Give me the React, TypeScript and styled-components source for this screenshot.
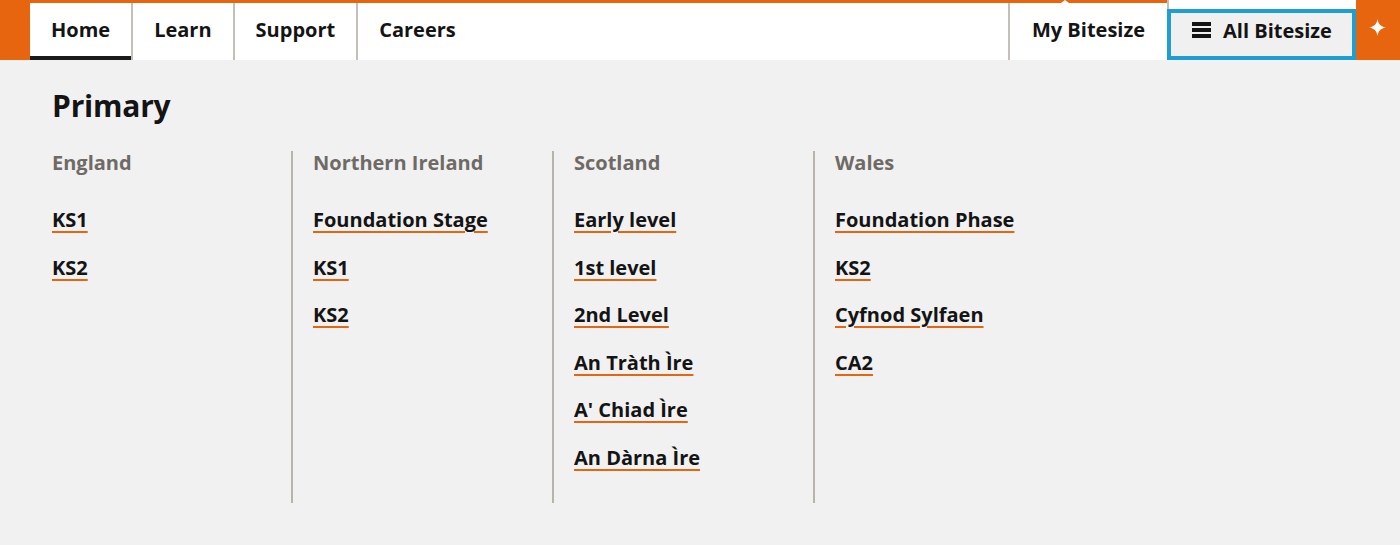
import React from 'react'
import styled, { createGlobalStyle } from 'styled-components'

const GlobalStyle = createGlobalStyle`
  body {
    margin: 0;
    background: #f1f1f1;
    font-family: 'Open Sans', 'Liberation Sans', sans-serif;
  }
`

interface Region {
  name: string,
  links: string[],
}

const regions: Region[] = [
  { name: 'England', links: ['KS1', 'KS2'] },
  { name: 'Northern Ireland', links: ['Foundation Stage', 'KS1', 'KS2'] },
  {
    name: 'Scotland',
    links: ['Early level', '1st level', '2nd Level', 'An Tràth Ìre', "A' Chiad Ìre", 'An Dàrna Ìre'],
  },
  { name: 'Wales', links: ['Foundation Phase', 'KS2', 'Cyfnod Sylfaen', 'CA2'] },
]

const tabs = ['Home', 'Learn', 'Support', 'Careers']

const MenuIcon = () => (
  <svg width="19" height="16" viewBox="0 0 19 16">
    <rect x="0" y="0" width="19" height="4" fill="#141414" />
    <rect x="0" y="6" width="19" height="4" fill="#141414" />
    <rect x="0" y="12" width="19" height="4" fill="#141414" />
  </svg>
)

const Sparkle = () => (
  <svg width="17" height="17" viewBox="0 0 14 14">
    <path d="M7 0 C7.6 4.2 9.8 6.4 14 7 C9.8 7.6 7.6 9.8 7 14 C6.4 9.8 4.2 7.6 0 7 C4.2 6.4 6.4 4.2 7 0Z" fill="#fff" />
  </svg>
)

const App: React.FC = () => {
  return (
    <>
      <GlobalStyle />
      <StyledHeader>
        <StyledNav>
          {tabs.map((tab, i) => (
            <StyledTab key={tab} active={i === 0} divided={i > 0}>{tab}</StyledTab>
          ))}
          <StyledSpacer />
          <StyledTab active={false} divided wide>My Bitesize</StyledTab>
        </StyledNav>
        <StyledAllWrap>
          <StyledAllButton>
            <MenuIcon />
            All Bitesize
          </StyledAllButton>
        </StyledAllWrap>
        <StyledStarCell>
          <Sparkle />
        </StyledStarCell>
        <StyledNotch />
      </StyledHeader>

      <StyledPanel>
        <StyledHeading>Primary</StyledHeading>
        <StyledColumns>
          {regions.map((region, i) => (
            <StyledColumn key={region.name} first={i === 0}>
              <StyledColumnTitle>{region.name}</StyledColumnTitle>
              <StyledLinkList>
                {region.links.map(link => (
                  <StyledLinkItem key={link}>
                    <StyledLink href="#">{link}</StyledLink>
                  </StyledLinkItem>
                ))}
              </StyledLinkList>
            </StyledColumn>
          ))}
        </StyledColumns>
      </StyledPanel>
    </>
  )
}

const StyledHeader = styled.header`
  position: relative;
  display: flex;
  height: 60px;
  background: #e8650f;
  padding-left: 30px;
`

const StyledNav = styled.nav`
  display: flex;
  flex: 1;
  margin-top: 3px;
  background: #fff;
`

const StyledTab = styled.a<{ active: boolean, divided: boolean, wide?: boolean }>`
  display: flex;
  align-items: center;
  padding: 0 ${p => (p.wide ? '22px' : '21px')} 4px;
  font-size: 20px;
  font-weight: 700;
  color: #141414;
  border-left: ${p => (p.divided ? '2px solid #c4c0b8' : 'none')};
  box-shadow: ${p => (p.active ? 'inset 0 -4px 0 #1a1a1a' : 'none')};
  cursor: pointer;
`

const StyledSpacer = styled.div`
  flex: 1;
`

const StyledAllWrap = styled.div`
  display: flex;
  background: #fff;
  border-left: 2px solid #c4c0b8;
  padding-top: 9px;
`

const StyledAllButton = styled.button`
  display: flex;
  align-items: center;
  gap: 12px;
  margin-left: -2px;
  width: 189px;
  padding: 0 0 9px 21px;
  background: #f0f0f0;
  border: 4px solid #1f9ed4;
  font-family: inherit;
  font-size: 20px;
  font-weight: 700;
  color: #141414;
  cursor: pointer;
`

const StyledStarCell = styled.div`
  box-sizing: border-box;
  display: flex;
  align-items: center;
  justify-content: center;
  width: 44px;
  padding: 0 2px 6px 0;
`

const StyledNotch = styled.span`
  position: absolute;
  top: 0;
  left: 1061px;
  width: 0;
  height: 0;
  border-left: 4px solid transparent;
  border-right: 4px solid transparent;
  border-bottom: 3px solid #fff;
`

const StyledPanel = styled.main`
  padding: 28px 0 0 52px;
  background: #f1f1f1;
`

const StyledHeading = styled.h1`
  margin: 0;
  font-size: 30px;
  line-height: 36px;
  font-weight: 700;
  letter-spacing: -0.2px;
  color: #141414;
`

const StyledColumns = styled.div`
  display: grid;
  grid-template-columns: 239px 261px 261px 261px;
  margin-top: 27px;
`

const StyledColumn = styled.div<{ first: boolean }>`
  padding: 0 0 33px ${p => (p.first ? '0' : '20px')};
  border-left: ${p => (p.first ? 'none' : '2px solid #b9b4aa')};
`

const StyledColumnTitle = styled.h2`
  margin: 0;
  font-size: 20px;
  line-height: 24px;
  font-weight: 700;
  color: #6e6b66;
`

const StyledLinkList = styled.ul`
  display: flex;
  flex-direction: column;
  gap: 23.5px;
  margin: 33px 0 0;
  padding: 0;
  list-style: none;
  font-size: 20px;
  line-height: 24px;
`

const StyledLinkItem = styled.li`
  height: 24px;
`

const StyledLink = styled.a`
  font-weight: 700;
  color: #141414;
  text-decoration: underline;
  text-decoration-color: #e8650f;
  text-decoration-thickness: 2px;
  text-underline-offset: 4px;
`

export default App
